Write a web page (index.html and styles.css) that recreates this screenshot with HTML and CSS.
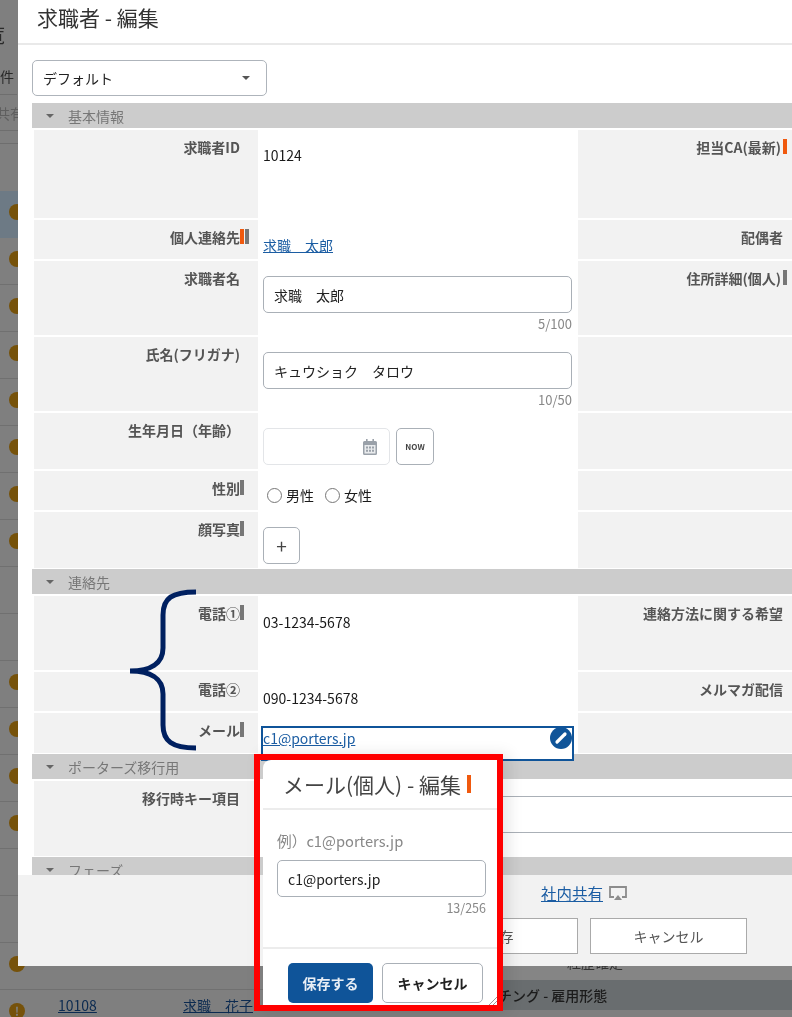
FILE: index.html
```html
<!DOCTYPE html>
<html lang="ja">
<head>
<meta charset="utf-8">
<title>求職者 - 編集</title>
<link rel="stylesheet" href="styles.css">
</head>
<body>
<div class="stage">
  <div class="backdrop">
    <div class="bg-list">
      <div class="bg-head">
        <div class="bg-title"><span>一覧</span></div>
        <div class="bg-count"><span>件</span></div>
        <div class="bg-share"><span>共有</span></div>
        <div class="bg-spacer"></div>
        <div class="bg-tools"></div>
      </div>
      <div class="bg-row is-selected"><span class="bg-badge"></span></div>
      <div class="bg-row"><span class="bg-badge"></span></div>
      <div class="bg-row"><span class="bg-badge"></span></div>
      <div class="bg-row"><span class="bg-badge"></span></div>
      <div class="bg-row"><span class="bg-badge"></span></div>
      <div class="bg-row"><span class="bg-badge"></span></div>
      <div class="bg-row"><span class="bg-badge"></span></div>
      <div class="bg-row"><span class="bg-badge"></span></div>
      <div class="bg-row"></div>
      <div class="bg-row"></div>
      <div class="bg-row"><span class="bg-badge"></span></div>
      <div class="bg-row"><span class="bg-badge"></span></div>
      <div class="bg-row"><span class="bg-badge"></span></div>
      <div class="bg-row"><span class="bg-badge"></span></div>
      <div class="bg-row"></div>
      <div class="bg-row"></div>
      <div class="bg-row"><span class="bg-badge"></span></div>
      <div class="bg-row"><span class="bg-badge">!</span><a class="bg-id">10108</a><a class="bg-name">求職　花子</a></div>
    </div>
    <div class="bg-side">
      <div class="bg-side-top"><span>経歴確定・</span></div>
      <div class="bg-side-band"><span>マッチング - 雇用形態</span></div>
    </div>
  </div>

  <div class="modal">
    <header class="modal-head"><h1>求職者 - 編集</h1></header>
    <div class="modal-body">
      <div class="select"><span>デフォルト</span><i class="caret"></i></div>

      <div class="section first"><i class="caret small"></i><span>基本情報</span></div>
      <div class="row h-88">
        <div class="label">求職者ID</div>
        <div class="value">10124</div>
        <div class="label right">担当CA(最新)<span class="marks"><i class="mark orange"></i></span></div>
      </div>
      <div class="row h-39">
        <div class="label">個人連絡先<span class="marks"><i class="mark orange"></i><i class="mark gray"></i></span></div>
        <div class="value"><a class="link">求職　太郎</a></div>
        <div class="label right">配偶者</div>
      </div>
      <div class="row h-74">
        <div class="label">求職者名</div>
        <div class="value">
          <div class="input">求職　太郎</div>
          <div class="counter">5/100</div>
        </div>
        <div class="label right">住所詳細(個人)<span class="marks"><i class="mark gray"></i></span></div>
      </div>
      <div class="row h-74">
        <div class="label">氏名(フリガナ)</div>
        <div class="value">
          <div class="input">キュウショク　タロウ</div>
          <div class="counter">10/50</div>
        </div>
        <div class="label right"></div>
      </div>
      <div class="row h-56">
        <div class="label">生年月日（年齢）</div>
        <div class="value date-line">
          <div class="date">
            <svg class="cal" viewBox="0 0 14 16" aria-hidden="true"><path fill="#9aa1a9" d="M3 0h1.600v2h4.800V0H11v2h1.500A1.500 1.500 0 0 1 14 3.500v11a1.500 1.500 0 0 1-1.500 1.500h-11A1.500 1.500 0 0 1 0 14.500v-11A1.500 1.500 0 0 1 1.500 2H3z"/><path fill="#e9ebed" d="M1.500 6h11v8.500h-11z"/><path fill="#9aa1a9" d="M3 7.500h2v2H3zM6 7.500h2v2H6zM9 7.500h2v2H9zM3 10.800h2v2H3zM6 10.800h2v2H6zM9 10.800h2v2H9z"/></svg>
          </div>
          <div class="btn-now">NOW</div>
        </div>
        <div class="label right"></div>
      </div>
      <div class="row h-39">
        <div class="label">性別<span class="marks"><i class="mark gray"></i></span></div>
        <div class="value radios">
          <span class="radio"></span><span class="radio-text">男性</span>
          <span class="radio"></span><span class="radio-text">女性</span>
        </div>
        <div class="label right"></div>
      </div>
      <div class="row h-56">
        <div class="label">顔写真<span class="marks"><i class="mark gray"></i></span></div>
        <div class="value"><div class="btn-plus">+</div></div>
        <div class="label right"></div>
      </div>

      <div class="section"><i class="caret small"></i><span>連絡先</span></div>
      <div class="row h-74">
        <div class="label">電話①<span class="marks"><i class="mark gray"></i></span></div>
        <div class="value lower">03-1234-5678</div>
        <div class="label right">連絡方法に関する希望</div>
      </div>
      <div class="row h-39">
        <div class="label">電話②</div>
        <div class="value lower">090-1234-5678</div>
        <div class="label right">メルマガ配信</div>
      </div>
      <div class="row h-40 over">
        <div class="label">メール<span class="marks"><i class="mark gray"></i></span></div>
        <div class="value">
          <div class="edit-cell">
            <a class="link">c1@porters.jp</a>
            <svg class="pencil" viewBox="0 0 22 22" aria-hidden="true"><circle cx="11" cy="11" r="11" fill="#0f5499"/><path d="M7 15l8-8" stroke="#fff" stroke-width="3.200" stroke-linecap="round"/></svg>
          </div>
        </div>
        <div class="label right"></div>
      </div>

      <div class="section"><i class="caret small"></i><span>ポーターズ移行用</span></div>
      <div class="row h-75 wide">
        <div class="label">移行時キー項目</div>
        <div class="value"><div class="input wide-input"></div></div>
      </div>

      <div class="section"><i class="caret small"></i><span>フェーズ</span></div>
    </div>
    <footer class="modal-foot">
      <div class="share">
        <a class="link">社内共有</a>
        <svg class="share-icon" viewBox="0 0 18 15" aria-hidden="true"><path fill="none" stroke="#8c8c8c" stroke-width="1.800" d="M5 11H1V1h16v10h-4"/><path fill="#8c8c8c" d="M9 9l4 5H5z"/></svg>
      </div>
      <div class="foot-buttons">
        <div class="btn-foot">保存</div>
        <div class="btn-foot">キャンセル</div>
      </div>
    </footer>
  </div>

  <svg class="brace" viewBox="0 0 80 170" aria-hidden="true">
    <path fill="none" stroke="#002060" stroke-width="5" d="M71 7C47 7 38 13 38 30V63C38 79 25 86 5 86C25 86 38 93 38 109V140C38 156 47 163 71 163"/>
  </svg>

  <div class="callout">
    <div class="popover">
      <div class="pop-head"><span>メール(個人) - 編集</span><i class="pop-mark"></i></div>
      <div class="pop-body">
        <div class="pop-hint">例）c1@porters.jp</div>
        <div class="input pop-input">c1@porters.jp</div>
        <div class="counter">13/256</div>
      </div>
      <div class="pop-foot">
        <div class="btn-primary">保存する</div>
        <div class="btn-cancel">キャンセル</div>
      </div>
      <svg class="grip" viewBox="0 0 8 8" aria-hidden="true"><path d="M0 8l8-8M4 8l4-4" stroke="#999" stroke-width="1" fill="none"/></svg>
    </div>
  </div>
</div>
</body>
</html>
```

FILE: styles.css
```css
* { box-sizing: border-box; }
html, body { margin: 0; padding: 0; }
body {
  font-family: "Noto Sans CJK JP", "Noto Sans", sans-serif;
  font-size: 14px;
  line-height: 20px;
  color: #1a1a1a;
}
i { display: block; }
a.link { color: #1b5da3; text-decoration: underline; }

.stage { position: relative; width: 792px; height: 1017px; overflow: hidden; background: #7f7f7f; filter: blur(0.35px); }

/* page behind the dialog */
.backdrop { display: flex; width: 792px; height: 1017px; }
.bg-list { width: 440px; flex: none; }
.bg-head { height: 191px; overflow: hidden; color: #2a2a2a; }
.bg-title { height: 58px; padding-top: 22px; font-size: 20px; line-height: 26px; width: 5px; overflow: hidden; direction: rtl; white-space: nowrap; }
.bg-count { height: 37px; width: 17px; padding-right: 4px; text-align: right; padding-top: 8px; border-bottom: 1px solid #6e6e6e; white-space: nowrap; }
.bg-share { height: 36px; width: 100%; padding-top: 8px; color: #5f5f5f; border-bottom: 1px solid #6e6e6e; text-indent: -4px; }
.bg-spacer { height: 13px; border-bottom: 1px solid #6e6e6e; }
.bg-tools { height: 48px; }
.bg-row { height: 47px; padding: 0 0 5px 9px; display: flex; align-items: center; border-bottom: 1px solid #707070; }
.bg-row.is-selected { background: #6d7a85; border-bottom: 0; }
.bg-badge { width: 16px; height: 16px; border-radius: 50%; background: #76520a; color: #7f7f7f; font-weight: 700; font-size: 12px; line-height: 16px; text-align: center; flex: none; }
.bg-row:last-child { align-items: flex-start; padding-top: 13px; }
.bg-id { margin-left: 33px; margin-top: -8px; color: #0b2a50; text-decoration: underline; width: 125px; flex: none; }
.bg-name { margin-top: -8px; color: #0b2a50; text-decoration: underline; white-space: nowrap; }
.bg-side { flex: 1; padding-top: 955px; }
.bg-side-top { height: 25px; background: #858585; overflow: hidden; line-height: 14px; padding-left: 127px; color: #333; }
.bg-side-band { height: 30px; background: #696d6f; line-height: 30px; color: #1c1c1c; font-weight: 500; white-space: nowrap; padding-left: 30px; }

/* dialog */
.modal { position: absolute; z-index: 1; left: 18px; top: 0; width: 774px; height: 966px; background: #fff; display: flex; flex-direction: column; }
.modal-head { height: 45px; flex: none; padding: 3px 0 0 19px; border-bottom: 2px solid #e9e9e9; }
.modal-head h1 { margin: 0; font-size: 21px; line-height: 28px; font-weight: 400; color: #333; }
.modal-body { flex: 1; min-height: 0; padding: 15px 0 0 14px; overflow: hidden; }

.select { width: 235px; height: 36px; border: 1px solid #aeb4bb; border-radius: 5px; display: flex; align-items: center; justify-content: space-between; padding: 0 16px 0 10px; color: #222; }
.caret { width: 0; height: 0; border-left: 4px solid transparent; border-right: 4px solid transparent; border-top: 4px solid #555; }
.caret.small { border-top-color: #666; }

.section { height: 25px; margin-top: 1px; background: #cccccc; display: flex; align-items: center; padding-left: 14px; gap: 14px; color: #777; }
.section.first { margin-top: 7px; }

.row { display: grid; grid-template-columns: 224px 320px 1fr; grid-template-rows: minmax(0, 1fr); margin: 2px 0 0 2px; }
.h-39 { height: 39px; }
.h-40 { height: 40px; }
.h-56 { height: 56px; }
.h-74 { height: 74px; }
.h-75 { height: 75px; }
.h-88 { height: 88px; }
.over { position: relative; z-index: 1; }
.row.wide { grid-template-columns: 224px 1fr; }

.label { background: #f2f2f2; display: flex; justify-content: flex-end; padding: 7px 18px 0 0; font-weight: 700; color: #555; white-space: nowrap; }
.label.right { padding-right: 9px; }
.marks { width: 0; height: 15px; margin-top: 2px; display: flex; gap: 1px; }
.right .marks { padding-left: 2px; }
.mark { width: 4px; height: 15px; flex: none; }
.mark.orange { background: #f0590e; }
.mark.gray { background: #777; }

.value { padding: 15px 5px 0; color: #1a1a1a; }
.value.lower { padding-top: 16px; }
.input { width: 309px; height: 37px; border: 1px solid #aab0b7; border-radius: 5px; padding: 1px 10px 0; line-height: 35px; color: #222; }
.counter { text-align: right; font-size: 13px; line-height: 16px; color: #888; margin-top: 3px; }
.row .value .counter { width: 309px; }
.wide-input { width: 560px; border-radius: 0; border-width: 1px 0 1px 1px; }

.date-line { display: flex; gap: 6px; align-items: flex-start; }
.date { width: 127px; height: 37px; border: 1px solid #e3e5e8; border-radius: 5px; display: flex; align-items: center; justify-content: flex-end; padding-right: 12px; }
.cal { width: 14px; height: 16px; }
.btn-now { width: 38px; height: 37px; border: 1px solid #aab0b7; border-radius: 5px; font-size: 8px; font-weight: 700; text-align: center; line-height: 35px; color: #444; }

.value.radios { display: flex; align-items: flex-start; padding-top: 14px; }
.radio { width: 15px; height: 15px; margin: 3px 4px 0 4px; border: 1.500px solid #777; border-radius: 50%; background: #fff; flex: none; }
.radio-text { width: 35px; flex: none; }
.btn-plus { width: 37px; height: 37px; border: 1px solid #aab0b7; border-radius: 5px; font-size: 19px; line-height: 35px; text-align: center; color: #444; }

.edit-cell { position: relative; width: 313px; height: 35px; margin: -2px 0 0 -2px; border: 2px solid #0f5499; line-height: 20px; background: #fff; }
.pencil { position: absolute; right: 0; top: -1px; width: 22px; height: 22px; }

.modal-foot { height: 91px; flex: none; background: #f2f2f2; padding: 8px 0 0 403px; }
.share { width: 326px; display: flex; justify-content: center; align-items: center; gap: 6px; font-size: 15.500px; height: 20px; }
.share-icon { width: 18px; height: 15px; }
.foot-buttons { display: flex; gap: 12px; margin-top: 15px; }
.btn-foot { width: 157px; height: 36px; background: #fff; border: 1px solid #aaa; text-align: center; line-height: 34px; color: #555; }

/* annotation shapes */
.brace { position: absolute; z-index: 2; left: 125px; top: 585px; width: 80px; height: 170px; }

.callout { position: absolute; z-index: 3; left: 254px; top: 754px; width: 249px; height: 257px; border: 6px solid #ff0000; box-shadow: 6px 0 14px rgba(0, 0, 0, .10); }
.popover { position: relative; height: 245px; margin-left: 3px; background: #fff; border-top-left-radius: 8px; display: flex; flex-direction: column; overflow: hidden; }
.pop-head { height: 50px; flex: none; border-bottom: 2px solid #ececec; display: flex; align-items: center; padding: 0 0 1px 20px; font-size: 21px; color: #444; }
.pop-mark { width: 4px; height: 18px; margin-left: 6px; background: #f0590e; }
.pop-body { padding: 21px 11px 0 14px; height: 139px; flex: none; border-bottom: 2px solid #ececec; }
.pop-hint { color: #888; height: 20px; font-size: 14.700px; margin-bottom: 9px; }
.pop-input { width: 209px; font-size: 14px; }
.pop-body .counter { font-size: 12.500px; }
.pop-foot { display: flex; gap: 9px; padding: 14px 0 0 25px; }
.btn-primary { width: 85px; height: 40px; border-radius: 5px; background: #0f5499; color: #e8eef5; font-weight: 700; text-align: center; line-height: 40px; }
.btn-cancel { width: 101px; height: 40px; border: 1px solid #aab0b7; border-radius: 5px; font-weight: 700; text-align: center; line-height: 38px; color: #222; }
.grip { position: absolute; right: 0; bottom: 0; width: 8px; height: 8px; }
```
